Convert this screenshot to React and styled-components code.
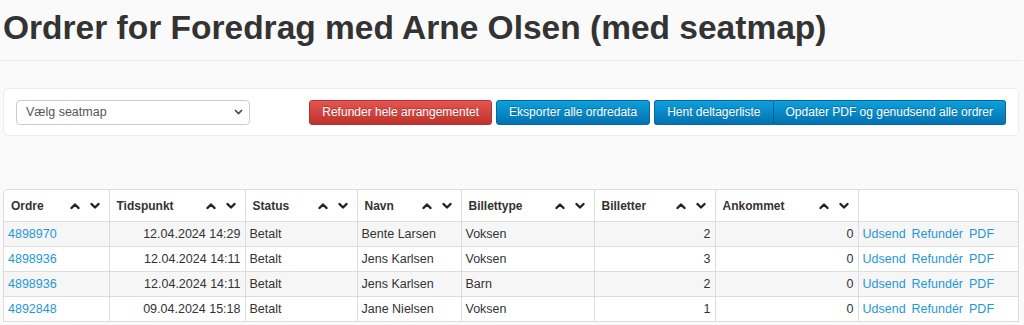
import React from 'react';
import styled, { createGlobalStyle } from 'styled-components';

const GlobalStyle = createGlobalStyle`
  html, body {
    margin: 0;
    padding: 0;
    background: #fafafa;
    font-family: 'Liberation Sans', Arial, sans-serif;
    color: #333;
  }
`;

const Page = styled.div`
  padding: 0 5px 0 3px;
`;

const Title = styled.h1`
  margin: 0;
  padding-top: 8px;
  font-size: 33.5px;
  line-height: 40px;
  font-weight: bold;
  color: #333;
`;

const Rule = styled.hr`
  margin: 12px -3px 0 -3px;
  border: 0;
  border-top: 1px solid #ececec;
`;

const Panel = styled.div`
  margin-top: 27px;
  background: #fff;
  border: 1px solid #ececec;
  border-radius: 5px;
  height: 46px;
  padding: 0 12px;
  display: flex;
  align-items: center;
  justify-content: space-between;
`;

const SelectBox = styled.div`
  width: 234px;
  height: 25px;
  box-sizing: border-box;
  border: 1px solid #ccc;
  border-radius: 4px;
  background: #fff;
  display: flex;
  align-items: center;
  justify-content: space-between;
  padding: 0 6px 0 9px;
  font-size: 12.5px;
  color: #555;
`;

const Actions = styled.div`
  display: flex;
  align-items: center;
  gap: 4px;
`;

const Group = styled.div`
  display: flex;
`;

const Button = styled.button`
  height: 25px;
  padding: 0 12px;
  font-family: 'Liberation Sans', Arial, sans-serif;
  font-size: 12px;
  color: #fff;
  text-shadow: 0 -1px 0 rgba(0, 0, 0, 0.25);
  border: 1px solid ${(p) => (p.$danger ? '#b5332e' : '#0667a3')};
  background: ${(p) =>
    p.$danger
      ? 'linear-gradient(#e65550, #bd322c)'
      : 'linear-gradient(#0ca0dd, #0571b0)'};
  border-radius: ${(p) =>
    p.$first ? '3px 0 0 3px' : p.$last ? '0 3px 3px 0' : '3px'};
  ${(p) => (p.$last ? 'border-left-color: #0a5f93;' : '')}
  ${(p) => (p.$first ? 'border-right: 0;' : '')}
  cursor: pointer;
`;

const TableWrap = styled.div`
  margin-top: 53px;
  background: #fff;
  border: 1px solid #ddd;
  border-bottom: 0;
  border-radius: 5px 5px 0 0;
  overflow: hidden;
`;

const Table = styled.table`
  width: 100%;
  table-layout: fixed;
  border-collapse: collapse;
  font-size: 12px;
`;

const Th = styled.th`
  height: 31px;
  padding: 0 9px 0 7px;
  text-align: left;
  font-weight: bold;
  font-size: 12px;
  color: #333;
  border-left: 1px solid #ddd;
  border-bottom: 1px solid #ddd;
  &:first-child {
    border-left: 0;
  }
`;

const HeadInner = styled.div`
  display: flex;
  align-items: center;
  justify-content: space-between;
`;

const Sorts = styled.span`
  display: flex;
  gap: 10px;
`;

const Row = styled.tr`
  background: ${(p) => (p.$odd ? '#f6f6f6' : '#fff')};
`;

const Td = styled.td`
  height: 24px;
  padding: 0 4px;
  border-left: 1px solid #ddd;
  border-bottom: 1px solid #ddd;
  text-align: ${(p) => (p.$right ? 'right' : 'left')};
  white-space: nowrap;
  font-size: 12.5px;
  color: #333;
  &:first-child {
    border-left: 0;
  }
`;

const Link = styled.a`
  color: #1f98d6;
  text-decoration: none;
  margin-right: ${(p) => (p.$gap ? '6px' : '0')};
`;

const Chevron = ({ up }) => (
  <svg width="10" height="8" viewBox="0 0 10 8">
    <path
      d={up ? 'M1.5 6 L5 2.5 L8.5 6' : 'M1.5 2 L5 5.5 L8.5 2'}
      fill="none"
      stroke="#222"
      strokeWidth="2.4"
      strokeLinecap="round"
      strokeLinejoin="round"
    />
  </svg>
);

const SelectArrow = () => (
  <svg width="9" height="6" viewBox="0 0 9 6">
    <path d="M1 1 L4.5 4.5 L8 1" fill="none" stroke="#444" strokeWidth="1.6" />
  </svg>
);

const columns = [
  { label: 'Ordre', width: 105 },
  { label: 'Tidspunkt', width: 136 },
  { label: 'Status', width: 112 },
  { label: 'Navn', width: 104 },
  { label: 'Billettype', width: 133 },
  { label: 'Billetter', width: 121 },
  { label: 'Ankommet', width: 143 },
  { label: '', width: 161 },
];

const orders = [
  { id: '4898970', time: '12.04.2024 14:29', status: 'Betalt', name: 'Bente Larsen', type: 'Voksen', tickets: 2, arrived: 0 },
  { id: '4898936', time: '12.04.2024 14:11', status: 'Betalt', name: 'Jens Karlsen', type: 'Voksen', tickets: 3, arrived: 0 },
  { id: '4898936', time: '12.04.2024 14:11', status: 'Betalt', name: 'Jens Karlsen', type: 'Barn', tickets: 2, arrived: 0 },
  { id: '4892848', time: '09.04.2024 15:18', status: 'Betalt', name: 'Jane Nielsen', type: 'Voksen', tickets: 1, arrived: 0 },
];

export default function App() {
  return (
    <>
      <GlobalStyle />
      <Page>
        <Title>Ordrer for Foredrag med Arne Olsen (med seatmap)</Title>
        <Rule />
        <Panel>
          <SelectBox>
            <span>Vælg seatmap</span>
            <SelectArrow />
          </SelectBox>
          <Actions>
            <Button $danger>Refunder hele arrangementet</Button>
            <Button>Eksporter alle ordredata</Button>
            <Group>
              <Button $first>Hent deltagerliste</Button>
              <Button $last>Opdater PDF og genudsend alle ordrer</Button>
            </Group>
          </Actions>
        </Panel>
        <TableWrap>
          <Table>
            <colgroup>
              {columns.map((c, i) => (
                <col key={i} style={{ width: c.width }} />
              ))}
            </colgroup>
            <thead>
              <tr>
                {columns.map((c, i) => (
                  <Th key={i}>
                    {c.label && (
                      <HeadInner>
                        <span>{c.label}</span>
                        <Sorts>
                          <Chevron up />
                          <Chevron />
                        </Sorts>
                      </HeadInner>
                    )}
                  </Th>
                ))}
              </tr>
            </thead>
            <tbody>
              {orders.map((o, i) => (
                <Row key={i} $odd={i % 2 === 0}>
                  <Td><Link href="#">{o.id}</Link></Td>
                  <Td $right>{o.time}</Td>
                  <Td>{o.status}</Td>
                  <Td>{o.name}</Td>
                  <Td>{o.type}</Td>
                  <Td $right>{o.tickets}</Td>
                  <Td $right>{o.arrived}</Td>
                  <Td>
                    <Link href="#" $gap>Udsend</Link>
                    <Link href="#" $gap>Refundér</Link>
                    <Link href="#">PDF</Link>
                  </Td>
                </Row>
              ))}
            </tbody>
          </Table>
        </TableWrap>
      </Page>
    </>
  );
}
